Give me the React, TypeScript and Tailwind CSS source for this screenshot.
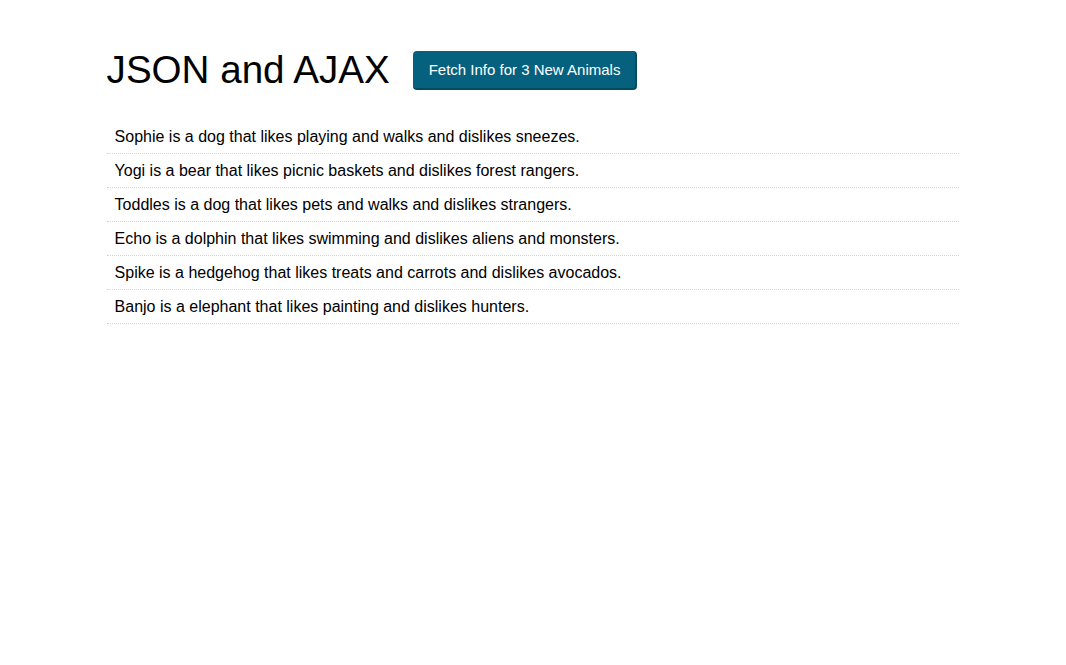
export default function App() {
  const items = [
    "Sophie is a dog that likes playing and walks and dislikes sneezes.",
    "Yogi is a bear that likes picnic baskets and dislikes forest rangers.",
    "Toddles is a dog that likes pets and walks and dislikes strangers.",
    "Echo is a dolphin that likes swimming and dislikes aliens and monsters.",
    "Spike is a hedgehog that likes treats and carrots and dislikes avocados.",
    "Banjo is a elephant that likes painting and dislikes hunters.",
  ];
  return (
    <div className="min-h-[665px] bg-white text-black font-['Liberation_Sans',Arial,sans-serif]">
      <div className="w-[80%] mx-auto pt-[40px]">
        <div className="flex items-center h-[60px] gap-[23px]">
          <h1 className="text-[38.6px] leading-none font-normal m-0">JSON and AJAX</h1>
          <button className="h-[39px] pl-[16px] pr-[15px] bg-[#06617e] text-white text-[15px] rounded-[4px] border-b-2 border-r-2 border-[#014a60] leading-none">
            Fetch Info for 3 New Animals
          </button>
        </div>
        <ul className="mt-[20px]">
          {items.map((t) => (
            <li
              key={t}
              className="px-2 py-2 leading-[17px] text-[16px] border-b border-dotted border-[#d6d6d6]"
            >
              {t}
            </li>
          ))}
        </ul>
      </div>
    </div>
  );
}
